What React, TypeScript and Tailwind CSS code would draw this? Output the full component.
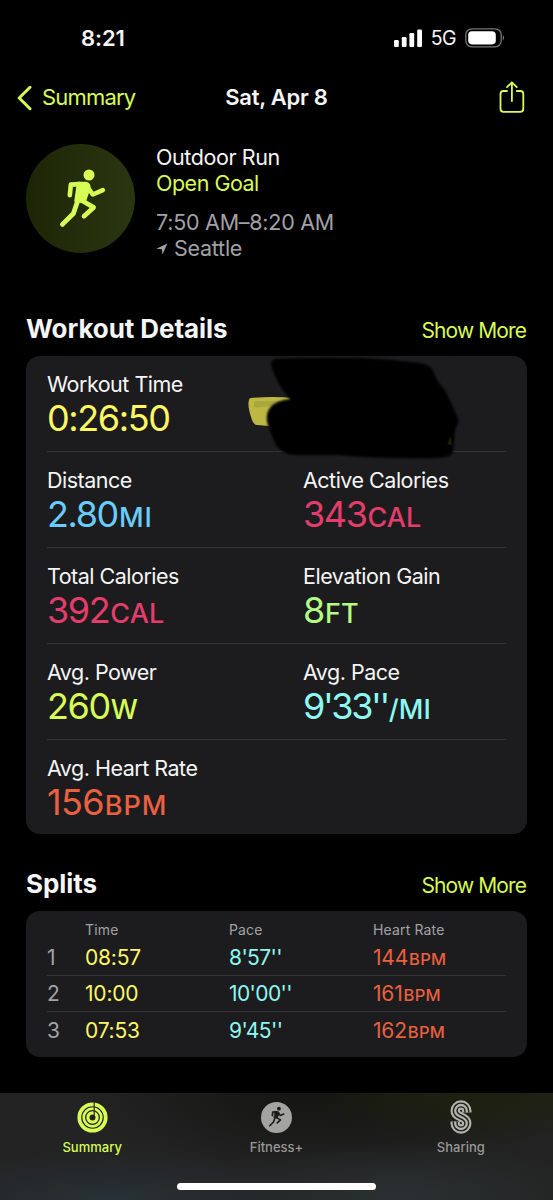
import React, { ReactNode } from "react";

interface Metric {
  label: string;
  value: string;
  unit?: string;
  color: string;
}

interface Split {
  time: string;
  pace: string;
  bpm: string;
}

const metricRows: Metric[][] = [
  [{ label: "Workout Time", value: "0:26:50", color: "text-[#fdf764]" }],
  [
    { label: "Distance", value: "2.80", unit: "MI", color: "text-[#68cdfb] [&>span]:tracking-[0.9px]" },
    { label: "Active Calories", value: "343", unit: "CAL", color: "text-[#e23d6b]" },
  ],
  [
    { label: "Total Calories", value: "392", unit: "CAL", color: "text-[#e23d6b]" },
    { label: "Elevation Gain", value: "8", unit: "FT", color: "text-[#b4fb83]" },
  ],
  [
    { label: "Avg. Power", value: "260", unit: "W", color: "text-[#d7fc55]" },
    { label: "Avg. Pace", value: "9'33''", unit: "/MI", color: "text-[#8df8f0] tracking-[-2.4px]" },
  ],
  [{ label: "Avg. Heart Rate", value: "156", unit: "BPM", color: "text-[#ea6040] tracking-[-0.7px] [&>span]:tracking-[1px]" }],
];

const splits: Split[] = [
  { time: "08:57", pace: "8'57''", bpm: "144" },
  { time: "10:00", pace: "10'00''", bpm: "161" },
  { time: "07:53", pace: "9'45''", bpm: "162" },
];

const Runner = ({ className }: { className: string }) => (
  <svg
    viewBox="0 0 48 58"
    className={`overflow-visible ${className}`}
    fill="none"
    stroke="currentColor"
    strokeLinecap="round"
    strokeLinejoin="round"
  >
    <circle cx="31" cy="5" r="5.5" fill="currentColor" stroke="none" />
    <path d="M20 13 L28 13 Q32.5 14 31 19 L26.5 32 L17.5 31 Z" fill="currentColor" strokeWidth="2.4" />
    <path d="M22 14.1 L12.9 14.6 L11.8 25.2" strokeWidth="4.6" />
    <path d="M29.5 17 L34.8 24.5 L44.8 20.2" strokeWidth="4.6" />
    <path d="M23 30 L35.6 37.4 L26 46.2" strokeWidth="4.8" />
    <path d="M20 30 L15.4 43.5 L4.4 54.4" strokeWidth="4.8" />
  </svg>
);

const StatusBar = () => (
  <div className="flex h-[76px] items-center justify-between pl-[81px] pr-[47px]">
    <span className="text-[22px] font-semibold tracking-[-0.1px]">8:21</span>
    <div className="flex items-center">
      <svg className="h-[18px] w-[28px]" viewBox="0 0 28 18" fill="white">
        <rect x="0" y="11" width="4.8" height="7" rx="1.3" />
        <rect x="7.8" y="8" width="4.8" height="10" rx="1.3" />
        <rect x="15.4" y="4" width="4.8" height="14" rx="1.3" />
        <rect x="23.2" y="0.4" width="4.8" height="17.6" rx="1.3" />
      </svg>
      <span className="ml-[9px] mr-[9px] pt-[2px] text-[19.5px] tracking-[-0.6px]">5G</span>
      <svg className="h-[20px] w-[41px]" viewBox="0 0 41 20" fill="none">
        <rect x="0.8" y="0.8" width="35.4" height="18" rx="6" stroke="#77777a" strokeWidth="1.3" />
        <rect x="3.2" y="3.2" width="27.6" height="13.2" rx="3.8" fill="white" />
        <path d="M37.8 7 Q40.4 9.8 37.8 12.6 Z" fill="#77777a" />
      </svg>
    </div>
  </div>
);

const NavBar = () => (
  <div className="grid h-[43px] grid-cols-3 items-center text-[22px]">
    <div className="flex items-center pl-[17px] text-[#d7fc55]">
      <svg className="h-[26px] w-[15px]" viewBox="0 0 15 26" fill="none">
        <path d="M13 2.3 L2.2 13 L13 23.7" stroke="currentColor" strokeWidth="3" strokeLinecap="round" strokeLinejoin="round" />
      </svg>
      <span className="ml-[10px] tracking-[-0.8px]">Summary</span>
    </div>
    <span className="text-center font-semibold tracking-[-0.25px]">Sat, Apr 8</span>
    <svg className="mb-[2px] mr-[28px] h-[32px] w-[26px] justify-self-end text-[#d7fc55]" viewBox="0 0 26 32" fill="none" stroke="currentColor" strokeWidth="1.8" strokeLinecap="round" strokeLinejoin="round">
      <path d="M8 10 H4.4 Q1.5 10 1.5 13 V27.8 Q1.5 30.8 4.5 30.8 H21.3 Q24.3 30.8 24.3 27.8 V13 Q24.3 10 21.4 10 H17.8" />
      <path d="M12.9 20 V1.5 M8 6.2 L12.9 1.3 L17.8 6.2" />
    </svg>
  </div>
);

const SectionHeader = ({ title }: { title: string }) => (
  <div className="flex h-[34px] items-baseline justify-between leading-[34px]">
    <h2 className="text-[26px] font-bold tracking-[-0.08px]">{title}</h2>
    <span className="mr-px text-[21px] tracking-[-0.9px] text-[#d7fc55]">Show More</span>
  </div>
);

const MetricCell = ({ label, value, unit, color }: Metric) => (
  <div>
    <div className="text-[21.5px] leading-[28px] tracking-[-0.5px]">{label}</div>
    <div className="whitespace-nowrap text-[36px] leading-[40px] tracking-[-1.4px]">
      <div className={color}>
        {value}
        {unit && <span className="ml-px text-[27px] font-medium tracking-[0.1px]">{unit}</span>}
      </div>
    </div>
  </div>
);

// Scribble drawn over the second metric of the first row
const Scribble = () => (
  <svg className="absolute left-[216px] top-0 h-[108px] w-[224px]" viewBox="0 0 224 108">
    <defs>
      <filter id="soft" x="-5%" y="-5%" width="110%" height="110%">
        <feGaussianBlur stdDeviation="1.3" />
      </filter>
    </defs>
    <path d="M9 42 Q30 40 52 42 L45 78 L32 78 L27 70 L15 69 Q12 69 10 64 Q5 50 7 44 Q7 42 9 42 Z" fill="#bdb843" />
    <path d="M12 51 Q25 52 38 48 V45 H12 Z" fill="#aba73d" />
    <path
      d="M32 3 Q100 0 150 4 L178 7 Q189 8 193 19 Q195 26 203 34 L216 62 Q217 67 213 74 L211 96 Q210 101 196 102 Q140 103 95 99 L52 99 Q40 98 34 89 Q28 76 25 66 Q22 46 48 43 Q37 31 31 15 Q27 5 32 3 Z"
      fill="black"
      filter="url(#soft)"
    />
    <path d="M205 88 L209 80 L210 89 Z" fill="#1e1d09" />
  </svg>
);

const Card = ({ children, className }: { children: ReactNode; className: string }) => (
  <div className={`relative rounded-[14px] bg-[#1c1c1e] px-[21px] ${className}`}>{children}</div>
);

const RingsIcon = () => (
  <svg className="size-[31px]" viewBox="0 0 31 31" fill="none" stroke="currentColor">
    <circle cx="15.5" cy="15.5" r="13.2" strokeWidth="3.8" />
    <circle cx="15.5" cy="15.5" r="8.8" strokeWidth="2.7" />
    <circle cx="15.5" cy="15.5" r="4.6" strokeWidth="3.2" />
    <path d="M17.2 0 V13" stroke="#252724" strokeWidth="1.2" />
  </svg>
);

const SharingIcon = () => {
  const s = "M16.8 12.4 V10.8 A5.8 5.8 0 0 0 5.2 10.8 C5.2 18.5 16.8 15.5 16.8 23.2 A5.8 5.8 0 0 1 5.2 23.2 V21.6";
  return (
    <svg className="h-[34px] w-[22px]" viewBox="0 0 22 34" fill="none">
      <path d={s} stroke="#b4b4ae" strokeWidth="9.4" />
      <path d={s} stroke="#20221b" strokeWidth="5.2" />
      <path d={s} stroke="#b4b4ae" strokeWidth="2.3" />
    </svg>
  );
};

const Tab = ({ icon, label, active }: { icon: ReactNode; label: string; active?: boolean }) => (
  <div className={`flex flex-1 flex-col items-center ${active ? "text-[#d7fc55]" : "text-[#989896]"}`}>
    <div className="flex h-[34px] items-center">{icon}</div>
    <span className="mt-[3px] text-[13px] font-medium leading-[20px]">{label}</span>
  </div>
);

const TabBar = () => (
  <div className="h-[107px] bg-[#232323] bg-[radial-gradient(ellipse_at_20%_100%,#293136_0%,transparent_32%),radial-gradient(ellipse_at_72%_95%,#2a3031_0%,transparent_35%),radial-gradient(ellipse_at_88%_5%,#1e210f_0%,transparent_30%),radial-gradient(ellipse_at_60%_0%,#131312_0%,transparent_55%)] pt-[7px]">
    <div className="flex">
      <Tab active label="Summary" icon={<RingsIcon />} />
      <Tab
        label="Fitness+"
        icon={
          <div className="flex size-[31px] items-center justify-center rounded-full bg-[#a3a3a1]">
            <Runner className="h-[20px] w-[17px] text-[#1b1b1a]" />
          </div>
        }
      />
      <Tab label="Sharing" icon={<SharingIcon />} />
    </div>
    <div className="mx-auto mt-[26px] h-[7px] w-[199px] rounded-full bg-white" />
  </div>
);

const App = () => {
  return (
    <div className="flex h-[1200px] w-[553px] flex-col overflow-hidden bg-black font-['Inter',sans-serif] text-[#f5f5f5]">
      <StatusBar />
      <NavBar />

      {/* Workout summary */}
      <div className="mt-[25px] flex h-[120px] items-start px-[26px]">
        <div className="flex size-[109px] items-center justify-center rounded-full bg-linear-to-r from-[#1d2506] to-[#2a3611]">
          <Runner className="ml-[3px] h-[58px] w-[48px] text-[#d7fc55]" />
        </div>
        <div className="ml-[21px] text-[21.5px] leading-[26px] tracking-[-0.4px]">
          <div>Outdoor Run</div>
          <div className="tracking-[-0.5px] text-[#d7fc55]">Open Goal</div>
          <div className="mt-[13px] tracking-[-0.25px] text-[#a2a2a6]">7:50 AM–8:20 AM</div>
          <div className="flex items-center tracking-[-0.25px] text-[#a2a2a6]">
            <svg className="mr-[6px] mt-[2px] h-[12px] w-[12px]" viewBox="0 0 12 12" fill="currentColor">
              <path d="M0.3 5.8 L11.4 0.5 L6.5 11.6 L5.8 6.3 Z" />
            </svg>
            Seattle
          </div>
        </div>
      </div>

      <div className="mt-[48px] px-[26px]">
        <SectionHeader title="Workout Details" />
        <Card className="mt-[10px] h-[478px]">
          {metricRows.map((row, i) => (
            <div
              key={row[0].label}
              className={`grid h-[96px] grid-cols-[256px_1fr] pt-[14px] ${i < 4 ? "border-b border-[#343436]" : ""}`}
            >
              {row.map((m) => (
                <MetricCell key={m.label} {...m} />
              ))}
            </div>
          ))}
          <Scribble />
        </Card>
      </div>

      <div className="mt-[33px] px-[26px]">
        <SectionHeader title="Splits" />
        <Card className="mt-[10px] h-[146px] pt-[9px]">
          <div className="grid grid-cols-[38px_144px_144px_1fr] text-[14px] leading-[20px] tracking-[0.15px] text-[#a2a2a6]">
            <span />
            <span>Time</span>
            <span>Pace</span>
            <span>Heart Rate</span>
          </div>
          {splits.map((s, i) => (
            <div
              key={s.time}
              className={`grid h-[36px] grid-cols-[38px_144px_144px_1fr] items-center pt-px text-[21px] tracking-[-0.2px] ${i < 2 ? "border-b border-[#343436]" : ""}`}
            >
              <span className="text-[#a2a2a6]">{i + 1}</span>
              <span className="text-[#fdf764]">{s.time}</span>
              <span className="tracking-[-0.6px] text-[#8df8f0]">{s.pace}</span>
              <span className="text-[#ea6040]">
                {s.bpm}
                <span className="ml-px text-[16.5px] font-medium tracking-[0.3px]">BPM</span>
              </span>
            </div>
          ))}
        </Card>
      </div>

      <div className="mt-auto">
        <TabBar />
      </div>
    </div>
  );
};

export default App;
